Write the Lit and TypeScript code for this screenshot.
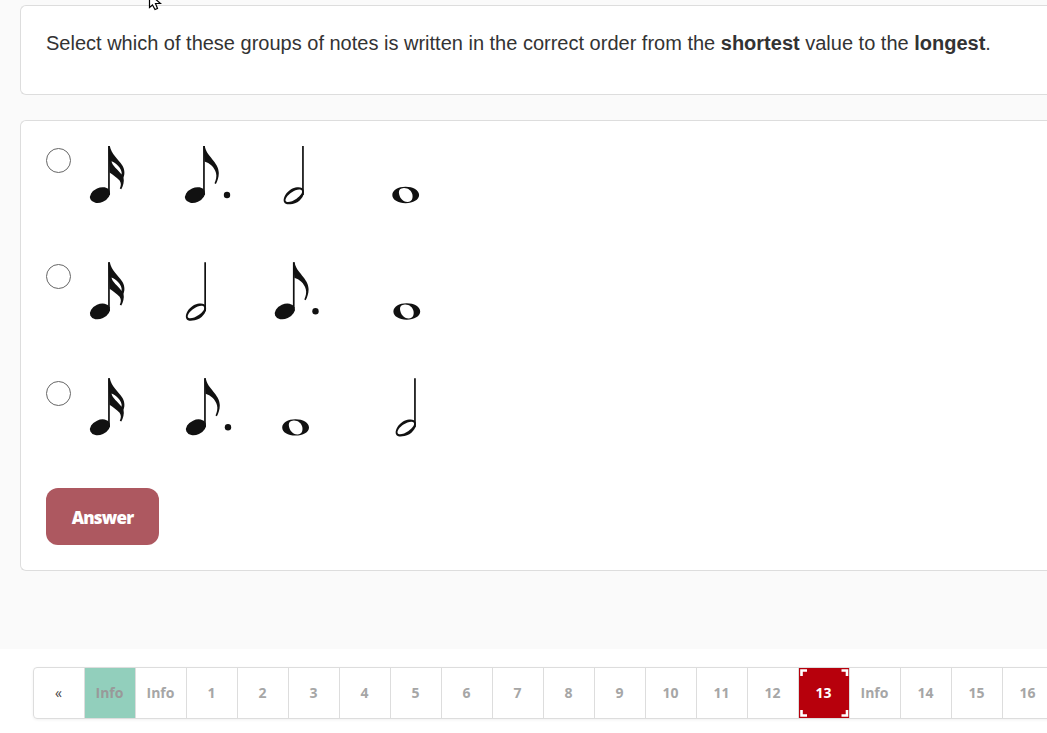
import { LitElement, html, svg, css } from "lit";
import { customElement } from "lit/decorators.js";

type Note = { kind: "sixteenth" | "eighth" | "half" | "whole"; x: number; y: number; dot?: number };

const ROWS: Note[][] = [
  [
    { kind: "sixteenth", x: 23, y: 6 },
    { kind: "eighth", x: 118, y: 6, dot: 23 },
    { kind: "half", x: 217, y: 6 },
    { kind: "whole", x: 319.7, y: 55 },
  ],
  [
    { kind: "sixteenth", x: 23, y: 6.3 },
    { kind: "half", x: 119.2, y: 6.3 },
    { kind: "eighth", x: 207.8, y: 6.3, dot: 21.7 },
    { kind: "whole", x: 320.8, y: 55.5 },
  ],
  [
    { kind: "sixteenth", x: 23, y: 6.2 },
    { kind: "eighth", x: 119, y: 6.2, dot: 23 },
    { kind: "whole", x: 209.6, y: 55.4 },
    { kind: "half", x: 329, y: 6.2 },
  ],
];

const stem = svg`<path d="M-.9 0H.8V49H-.9Z"/>`;
const head = svg`<ellipse cx="-9" cy="49.100" rx="10.500" ry="7.300" transform="rotate(-24 -9 49.1)"/>`;

const GLYPHS = {
  eighth: svg`${stem}${head}<path d="M-.6 0H.8C2 10 14.800 16 14.800 27C14.800 31.500 13.400 35 11.900 38L10.500 37.300C12 34 12.900 30.500 12 27C10.500 21 5.500 17 .5 15.500Z"/>`,
  sixteenth: svg`${stem}${head}<path fill-rule="evenodd" d="M-.6 0H.8C2.200 8 9.200 13 13 19C15.300 22.500 16.300 27 14.500 31.500C15.500 36 14 40 12.300 43.200L10.800 42.500C12.200 39.500 12.300 37 10.600 34.500C7.500 31 4 29 .5 26.500Z M2.500 15.300C3 19.500 9 23.800 12.600 28.600C13.200 25.500 11.500 22.200 9 19.700C7 17.700 4.800 16 2.500 15.300Z"/>`,
  half: svg`${stem}<path fill-rule="evenodd" d="M-18.700 56.600C-21.200 51.500-14.500 42.300-6 41.300C-2.500 40.900 0 41.800 .8 44.400C1.900 50-3.500 56.600-10.500 57.900C-14.500 58.700-17.900 58.500-18.700 56.600Z M-17.300 55C-16.100 57.300-10.500 55.500-6.500 52.700C-2.500 49.900 0 46.500-1.200 44.600C-2.700 42.400-7.500 43.700-11.500 46.400C-15.500 49.100-18.300 52.900-17.300 55Z"/>`,
  whole: svg`<path fill-rule="evenodd" d="M-13.400 0C-13.400-4.700-7.500-8.200-.1-8.200S13.400-4.700 13.400 0S7.500 8.200-.1 8.200S-13.400 4.700-13.400 0Z M-6.800-2.500C-6.500 2.500-3 7.100 2 7C6.200 6.800 7.400 3.500 6.700-.5C5.900-4.300 2.200-7.300-2-7C-5.400-6.800-6.900-5.200-6.800-2.500Z"/>`,
};

const PAGES = ["«", "Info", "Info", "1", "2", "3", "4", "5", "6", "7", "8", "9", "10", "11", "12", "13", "Info", "14", "15", "16"];

@customElement("app-root")
export class AppRoot extends LitElement {
  static styles = css`
    :host {
      display: block;
      position: relative;
      width: 1047px;
      height: 733px;
      overflow: hidden;
      background: #fff;
      font-family: "Liberation Sans", Arial, sans-serif;
      color: #333;
    }
    .main {
      box-sizing: border-box;
      height: 649px;
      padding: 5px 0 0 20px;
      background: #fafafa;
      display: flex;
      flex-direction: column;
      gap: 25px;
    }
    .card {
      box-sizing: border-box;
      background: #fff;
      border: 1px solid #ddd;
      border-right: 0;
      border-radius: 6px 0 0 6px;
      padding-left: 25px;
    }
    .question {
      height: 90px;
      padding-top: 22px;
      font-size: 20px;
      line-height: 30px;
      white-space: nowrap;
    }
    .answers {
      height: 451px;
      padding-top: 19px;
    }
    .option {
      height: 116px;
      display: flex;
      gap: 15px;
    }
    .radio {
      box-sizing: border-box;
      width: 25px;
      height: 25px;
      margin: 8px 0 0;
      border: 1px solid #666;
      border-radius: 50%;
      background: #fff;
      flex: none;
    }
    .option:last-of-type .radio {
      margin-top: 9px;
    }
    .notes {
      display: block;
      fill: #111;
    }
    .answer {
      display: block;
      box-sizing: border-box;
      width: 113px;
      height: 57px;
      padding: 3px 0 0;
      border: 0;
      border-radius: 12px;
      background: #ad5860;
      color: #fff;
      font: 800 17px/54px "Open Sans", "Noto Sans", sans-serif;
      letter-spacing: -0.8px;
    }
    .pager {
      display: flex;
      box-sizing: border-box;
      width: 1060px;
      height: 52px;
      margin: 18px 0 0 33px;
      border: 1px solid #ddd;
      border-radius: 4px;
      box-shadow: 0 1px 3px rgba(0, 0, 0, 0.06);
      font: 700 14px/50px "Open Sans", "Noto Sans", sans-serif;
      color: #a6a6a6;
      text-align: center;
    }
    .page {
      box-sizing: border-box;
      flex: 0 0 51px;
      height: 50px;
      padding-right: 1px;
      border-right: 1px solid #ddd;
    }
    .prev {
      color: #444;
      font-size: 14px;
      font-weight: 400;
    }
    .done {
      background: #92cfbc;
      color: #999;
    }
    .current {
      position: relative;
      background: #b7000c;
      color: #fff;
    }
    .corners {
      position: absolute;
      left: 0;
      top: 0;
      fill: none;
      stroke: #fff;
      stroke-width: 2.600;
    }
    .cursor {
      position: absolute;
      left: 148px;
      top: 0;
    }
  `;

  private row(notes: Note[]) {
    return html`<div class="option">
      <span class="radio" role="radio"></span>
      <svg class="notes" width="350" height="70" viewBox="0 0 350 70">
        ${notes.map(
          (n) => svg`<g transform="translate(${n.x} ${n.y})">${GLYPHS[n.kind]}${n.dot ? svg`<circle cx=${n.dot} cy="49" r="3.200"/>` : ""}</g>`
        )}
      </svg>
    </div>`;
  }

  private page(label: string, i: number) {
    const state = i === 0 ? "prev" : i === 1 ? "done" : label === "13" ? "current" : "";
    return html`<div class="page ${state}">${label}${
      state === "current"
        ? html`<svg class="corners" width="50" height="50" viewBox="0 0 50 50"><path d="M2.500 8V2.500H8M42.500 2.500H48V8M48 42V47.500H42.500M8 47.500H2.500V42"/></svg>`
        : ""
    }</div>`;
  }

  render() {
    return html`
      <div class="main">
        <div class="card question">Select which of these groups of notes is written in the correct order from the <b>shortest</b> value to the <b>longest</b>.</div>
        <div class="card answers">
          ${ROWS.map((r) => this.row(r))}
          <button class="answer">Answer</button>
        </div>
      </div>
      <div class="pager">${PAGES.map((p, i) => this.page(p, i))}</div>
      <svg class="cursor" width="14" height="12" viewBox="0 0 14 12">
        <path d="M1.500-6V7.500L4.500 5L7 9.500L9.500 8.500L7.500 3.500H12.500Z" fill="#fff" stroke="#000" stroke-width="1.200"/>
      </svg>
    `;
  }
}
